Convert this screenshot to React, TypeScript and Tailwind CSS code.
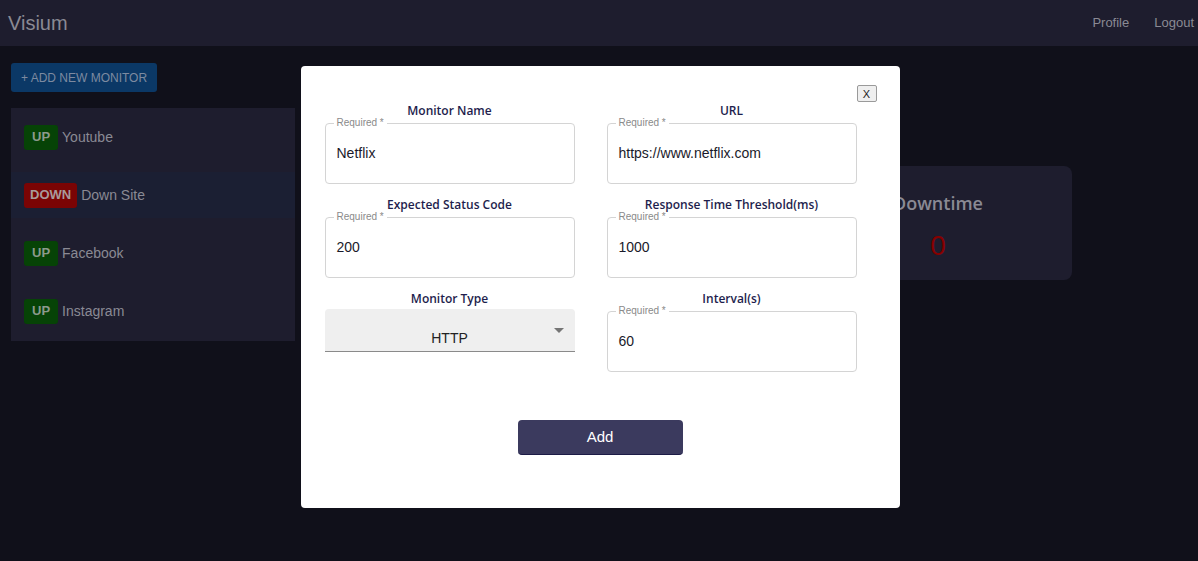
import type { FunctionComponent } from "react";

type Monitor = { name: string; up: boolean; selected?: boolean };

const monitors: Monitor[] = [
  { name: "Youtube", up: true },
  { name: "Down Site", up: false, selected: true },
  { name: "Facebook", up: true },
  { name: "Instagram", up: true },
];

const sans = "font-['Liberation_Sans',Arial,sans-serif]";
const heading = "font-['Open_Sans','Noto_Sans',sans-serif]";
const labelCls = `${heading} h-[16px] text-center text-[12px] font-semibold leading-[20px] text-[#1e1e4d]`;

const Field: FunctionComponent<{ label: string; value: string }> = ({
  label,
  value,
}) => (
  <div className="flex flex-col">
    <div className={labelCls}>{label}</div>
    <fieldset className="h-[67px] rounded-[4px] border border-[#d4d4d4] px-[8px]">
      <legend
        className={`${sans} ml-0 px-[3px] text-[10px] leading-[12px] text-[#8a8a8a]`}
      >
        Required *
      </legend>
      <div
        className={`${sans} pl-[3px] pt-[16px] text-[14px] leading-[16px] text-[#1a1a2a]`}
      >
        {value}
      </div>
    </fieldset>
  </div>
);

const App: FunctionComponent = () => (
  <div className={`${sans} min-h-[561px] bg-[#10101a]`}>
    <nav className="flex h-[46px] items-center bg-[#1e1d2e] pl-[8px] pr-[4px]">
      <span className="text-[20px] text-[#8a8a94]">Visium</span>
      <div className="ml-auto flex gap-[25px] text-[13px] text-[#8a8a94]">
        <span>Profile</span>
        <span>Logout</span>
      </div>
    </nav>

    <div className="px-[11px] pt-[17px]">
      <button className="h-[29px] rounded-[3px] bg-[#0b3866] px-[10px] text-[12px] text-[#7d8aa0]">
        + ADD NEW MONITOR
      </button>

      <div className="mt-[16px] flex">
        <div className="flex w-[284px] flex-col gap-[12px] bg-[#1e1d2e] pb-[7px] pt-[6px]">
          {monitors.map((m) => (
            <div
              key={m.name}
              className={`flex h-[46px] items-center gap-[4px] pl-[13px] ${
                m.selected ? "bg-[#1b1f33]" : ""
              }`}
            >
              <span
                className={`flex h-[25px] items-center rounded-[3px] text-[13px] font-bold ${
                  m.up
                    ? "bg-[#064306] px-[8px] text-[#8c9a8c]"
                    : "bg-[#7a0404] px-[6px] text-[#a99a9a]"
                }`}
              >
                {m.up ? "UP" : "DOWN"}
              </span>
              <span className="text-[14px] text-[#8a8a94]">{m.name}</span>
            </div>
          ))}
        </div>

        <div className="flex flex-1 justify-end pr-[115px] pt-[58px]">
          <div className="flex h-[114px] w-[268px] flex-col items-center rounded-[8px] bg-[#1e1d2e] pt-[24px]">
            <span
              className={`${heading} text-[18px] font-semibold text-[#8a8a94]`}
            >
              Downtime
            </span>
            <span className="mt-[8px] text-[28px] text-[#860000]">0</span>
          </div>
        </div>
      </div>
    </div>

    <div className="fixed inset-0 flex justify-center pl-[2px] pt-[66px]">
      <div className="relative h-[442px] w-[599px] rounded-[4px] bg-white pt-[35px]">
        <button className="absolute right-[23px] top-[19px] h-[17px] w-[20px] rounded-[2px] border border-[#9a9a9a] bg-[#efefef] text-[11px] leading-[14px] text-[#222]">
          X
        </button>
        <div className="grid grid-cols-[250px_250px] gap-x-[32px] gap-y-[11px] pl-[24px]">
          <Field label="Monitor Name" value="Netflix" />
          <Field label="URL" value="https://www.netflix.com" />
          <Field label="Expected Status Code" value="200" />
          <Field label="Response Time Threshold(ms)" value="1000" />
          <div className="flex flex-col">
            <div className={labelCls}>Monitor Type</div>
            <div className="relative mt-[4px] flex h-[43px] items-end justify-center rounded-t-[4px] border-b border-[#8a8a8a] bg-[#efefef] pb-[2px] text-[14px] text-[#222]">
              HTTP
              <span className="absolute right-[11px] top-[19px] h-0 w-0 border-x-[5px] border-t-[5px] border-x-transparent border-t-[#757575]" />
            </div>
          </div>
          <Field label="Interval(s)" value="60" />
        </div>
        <div className="mt-[48px] flex justify-center">
          <button className="h-[35px] w-[165px] rounded-[4px] border-b border-[#1c1b46] bg-[#3b3a5e] text-[15px] text-white">
            Add
          </button>
        </div>
      </div>
    </div>
  </div>
);

export default App;
